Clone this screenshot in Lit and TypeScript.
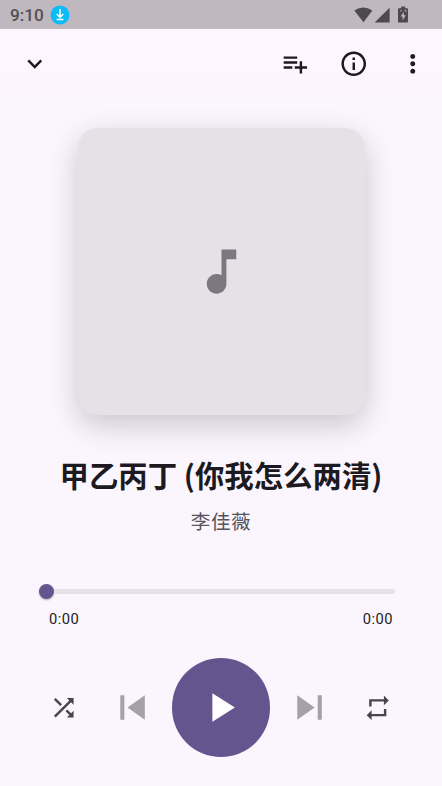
import { LitElement, html, svg, css } from "lit";
import { customElement } from "lit/decorators.js";

const paths = {
  expand: "M16.59 8.59 12 13.17 7.41 8.59 6 10l6 6 6-6z",
  playlistAdd: "M14 10H3v2h11v-2zm0-4H3v2h11V6zm4 8v-4h-2v4h-4v2h4v4h2v-4h4v-2h-4zM3 16h7v-2H3v2z",
  info: "M11 7h2v2h-2zm0 4h2v6h-2zm1-9C6.48 2 2 6.48 2 12s4.48 10 10 10 10-4.48 10-10S17.52 2 12 2zm0 18c-4.41 0-8-3.59-8-8s3.59-8 8-8 8 3.59 8 8-3.59 8-8 8z",
  more: "M12 8c1.1 0 2-.9 2-2s-.9-2-2-2-2 .9-2 2 .9 2 2 2zm0 2c-1.1 0-2 .9-2 2s.9 2 2 2 2-.9 2-2-.9-2-2-2zm0 6c-1.1 0-2 .9-2 2s.9 2 2 2 2-.9 2-2-.9-2-2-2z",
  note: "M12 3v10.55c-.59-.34-1.27-.55-2-.55-2.21 0-4 1.79-4 4s1.79 4 4 4 4-1.79 4-4V7h4V3h-6z",
  shuffle: "M10.59 9.17 5.41 4 4 5.41l5.17 5.17 1.42-1.41zM14.5 4l2.04 2.04L4 18.59 5.41 20 17.96 7.46 20 9.5V4h-5.5zm.33 9.41-1.41 1.41 3.13 3.13L14.5 20H20v-5.5l-2.04 2.04-3.13-3.13z",
  previous: "M6 6h2v12H6zm3.5 6 8.5 6V6z",
  play: "M8 5v14l11-7z",
  next: "M6 18l8.5-6L6 6v12zM16 6v12h2V6h-2z",
  repeat: "M7 7h10v3l4-4-4-4v3H5v6h2V7zm10 10H7v-3l-4 4 4 4v-3h12v-6h-2v4z",
};

const icon = (name: keyof typeof paths, size = "") =>
  html`<svg class="icon ${size}" viewBox="0 0 24 24">${svg`<path d=${paths[name]} />`}</svg>`;

@customElement("status-bar")
class StatusBar extends LitElement {
  static styles = css`
    :host {
      display: flex;
      align-items: center;
      height: 29px;
      padding: 1px 32px 0 10px;
      box-sizing: border-box;
      background: #bfb8bf;
      color: #535053;
      font: 500 17.2px/28px Roboto, sans-serif;
    }
    svg { display: block; }
    .download { margin-left: 6px; }
    .system { display: flex; margin-left: auto; }
  `;
  render() {
    return html`
      <span>9:10</span>
      <svg class="download" width="20" height="20" viewBox="0 0 20 20">
        <circle cx="10" cy="10" r="9.5" fill="#0cbcf8" />
        <path d="M10 4v8M6.7 9l3.3 3.3L13.3 9M6.6 14.4h6.8" fill="none" stroke="#fff" stroke-width="1.5" />
      </svg>
      <svg class="system" width="56" height="18" viewBox="0 0 56 18" fill="#4d494d">
        <path d="M.3 4.6Q9.3 -1.8 18.3 4.6L9.5 16.2z" />
        <path d="M20.6 16.5H35.6V1.7z" />
        <path d="M44.8 2.3h2.4V.6h4V2.3h2q.8 0 .8.8v12.6q0 .8-.8.8h-8.4q-.8 0-.8-.8V3.1q0-.8.8-.8z" />
        <path d="M49.8 5.8 46.6 10.4h2v3.8l3.2-5h-2z" fill="#bfb8bf" />
        <path d="M46 4.8h2M50.3 4.3h1.7v1.7" fill="none" stroke="#bfb8bf" stroke-width=".8" />
      </svg>
    `;
  }
}

@customElement("app-root")
class AppRoot extends LitElement {
  static styles = css`
    :host {
      display: flex;
      flex-direction: column;
      height: 786px;
      overflow: hidden;
      background: linear-gradient(#fef5fe 0, #fef5fe 70px, #fbf6fe 110px);
      color: #1c1a20;
      font-family: Roboto, "Noto Sans CJK SC", sans-serif;
    }
    .icon {
      display: block;
      width: 29.5px;
      height: 29.5px;
      fill: currentColor;
      flex: none;
    }
    .icon.large { width: 49.1px; height: 49.1px; }
    .icon.xlarge { width: 59px; height: 59px; }
    .toolbar {
      display: flex;
      align-items: center;
      height: 70px;
      padding: 0 15px 0 20px;
      gap: 29.4px;
    }
    .toolbar .icon:first-child { margin-right: auto; }
    .cover {
      display: grid;
      place-items: center;
      width: 287px;
      height: 287px;
      margin: 29px 0 0 77.5px;
      border-radius: 20px;
      background: #e5e1e7;
      color: #7b787f;
      box-shadow: 0 10px 30px rgba(0, 0, 0, 0.2);
      flex: none;
    }
    h1 {
      margin: 38px 0 0;
      font: 700 29.4px/43px "Noto Sans CJK SC", sans-serif;
      text-align: center;
      white-space: nowrap;
    }
    .artist {
      margin-top: 10px;
      color: #57535c;
      font: 400 19.6px/29px "Noto Sans CJK SC", sans-serif;
      letter-spacing: 0.5px;
      text-align: center;
    }
    .seek {
      display: flex;
      align-items: center;
      height: 15px;
      margin: 49px 47px 0 39px;
      flex: none;
    }
    .thumb {
      width: 15px;
      height: 15px;
      border-radius: 50%;
      background: #65558f;
      box-shadow: 0 1px 2px rgba(0, 0, 0, 0.3);
    }
    .track {
      flex: 1;
      height: 5px;
      border-radius: 0 2.5px 2.5px 0;
      background: #e6e1e7;
    }
    .times {
      display: flex;
      justify-content: space-between;
      margin: 10px 49px 0;
      font-size: 14.7px;
      line-height: 20px;
      letter-spacing: 0.5px;
    }
    .controls {
      display: flex;
      align-items: center;
      justify-content: center;
      height: 98px;
      margin-top: 29.5px;
      color: #49454f;
    }
    .skip { color: #a5a1a8; margin: 0 15px 0 29px; }
    .play + .skip { margin: 0 29px 0 15px; }
    .play {
      display: grid;
      place-items: center;
      width: 98.2px;
      height: 98.2px;
      border-radius: 50%;
      background: #65558f;
      color: #fff;
    }
  `;
  render() {
    return html`
      <status-bar></status-bar>
      <div class="toolbar">
        ${icon("expand")} ${icon("playlistAdd")} ${icon("info")} ${icon("more")}
      </div>
      <div class="cover">${icon("note", "xlarge")}</div>
      <h1>甲乙丙丁 (你我怎么两清)</h1>
      <div class="artist">李佳薇</div>
      <div class="seek">
        <div class="thumb"></div>
        <div class="track"></div>
      </div>
      <div class="times"><span>0:00</span><span>0:00</span></div>
      <div class="controls">
        ${icon("shuffle")} ${icon("previous", "large skip")}
        <div class="play">${icon("play", "large")}</div>
        ${icon("next", "large skip")} ${icon("repeat")}
      </div>
    `;
  }
}
